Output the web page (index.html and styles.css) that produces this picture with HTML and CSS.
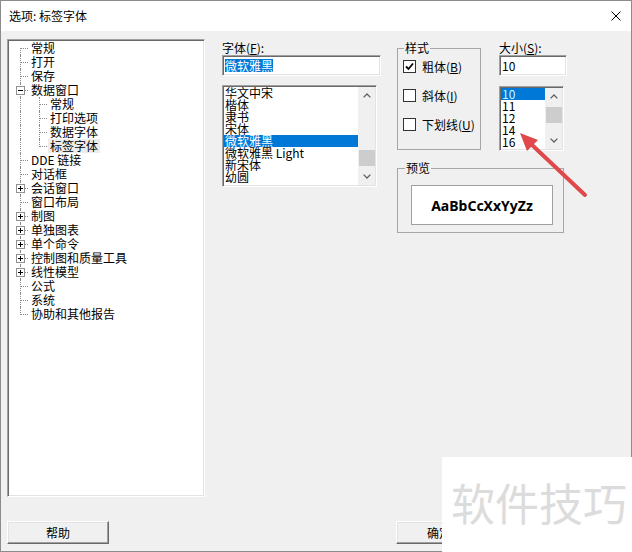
FILE: index.html
```html
<!DOCTYPE html>
<html lang="zh-CN">
<head>
<meta charset="utf-8">
<title>选项: 标签字体</title>
<link rel="stylesheet" href="styles.css">
</head>
<body>
<div class="window">
  <div class="titlebar">
    <span class="title">选项: 标签字体</span>
    <svg class="close" width="10" height="10" viewBox="0 0 10 10"><path d="M0.5 0.5L9.5 9.5M9.5 0.5L0.5 9.5" stroke="#000" stroke-width="1" fill="none"/></svg>
  </div>
  <div class="content">
    <div class="main">
      <div class="tree sunken">
        <div class="row"><span class="g first"></span><span class="lbl">常规</span></div>
        <div class="row"><span class="g tee"></span><span class="lbl">打开</span></div>
        <div class="row"><span class="g tee"></span><span class="lbl">保存</span></div>
        <div class="row"><span class="g tee"><span class="exp"></span></span><span class="lbl">数据窗口</span></div>
        <div class="row"><span class="g pipe"></span><span class="g tee"></span><span class="lbl">常规</span></div>
        <div class="row"><span class="g pipe"></span><span class="g tee"></span><span class="lbl">打印选项</span></div>
        <div class="row"><span class="g pipe"></span><span class="g tee"></span><span class="lbl">数据字体</span></div>
        <div class="row"><span class="g pipe"></span><span class="g last"></span><span class="lbl current">标签字体</span></div>
        <div class="row"><span class="g tee"></span><span class="lbl">DDE 链接</span></div>
        <div class="row"><span class="g tee"></span><span class="lbl">对话框</span></div>
        <div class="row"><span class="g tee"><span class="exp plus"></span></span><span class="lbl">会话窗口</span></div>
        <div class="row"><span class="g tee"></span><span class="lbl">窗口布局</span></div>
        <div class="row"><span class="g tee"><span class="exp plus"></span></span><span class="lbl">制图</span></div>
        <div class="row"><span class="g tee"><span class="exp plus"></span></span><span class="lbl">单独图表</span></div>
        <div class="row"><span class="g tee"><span class="exp plus"></span></span><span class="lbl">单个命令</span></div>
        <div class="row"><span class="g tee"><span class="exp plus"></span></span><span class="lbl">控制图和质量工具</span></div>
        <div class="row"><span class="g tee"><span class="exp plus"></span></span><span class="lbl">线性模型</span></div>
        <div class="row"><span class="g tee"></span><span class="lbl">公式</span></div>
        <div class="row"><span class="g tee"></span><span class="lbl">系统</span></div>
        <div class="row"><span class="g last"></span><span class="lbl">协助和其他报告</span></div>
      </div>

      <div class="font-col">
        <div class="cap">字体(<u>F</u>):</div>
        <div class="input sunken font-input"><span class="hl">微软雅黑</span></div>
        <div class="list sunken font-list">
          <div class="items">
            <div class="item">华文中宋</div>
            <div class="item">楷体</div>
            <div class="item">隶书</div>
            <div class="item">宋体</div>
            <div class="item selected">微软雅黑</div>
            <div class="item">微软雅黑 Light</div>
            <div class="item">新宋体</div>
            <div class="item">幼圆</div>
          </div>
          <div class="sb">
            <div class="arr"><svg width="8" height="5" viewBox="0 0 8 5"><path d="M0.6 4.4L4 1L7.4 4.4" stroke="#606060" stroke-width="1.3" fill="none"/></svg></div>
            <div class="track"><div class="thumb font-thumb"></div></div>
            <div class="arr"><svg width="8" height="5" viewBox="0 0 8 5"><path d="M0.6 0.6L4 4L7.4 0.6" stroke="#606060" stroke-width="1.3" fill="none"/></svg></div>
          </div>
        </div>
      </div>

      <div class="right-col">
        <div class="top-row">
          <fieldset class="group style-group">
            <legend>样式</legend>
            <div class="check"><span class="cb"><svg width="11" height="11" viewBox="0 0 11 11"><path d="M2 5.5L4.5 8L9 2.5" stroke="#000" stroke-width="1.8" fill="none"/></svg></span><span>粗体(<u>B</u>)</span></div>
            <div class="check"><span class="cb"></span><span>斜体(<u>I</u>)</span></div>
            <div class="check"><span class="cb"></span><span>下划线(<u>U</u>)</span></div>
          </fieldset>
          <div class="size-col">
            <div class="cap">大小(<u>S</u>):</div>
            <div class="input sunken size-input">10</div>
            <div class="list sunken size-list">
              <div class="items">
                <div class="item selected cyan">10</div>
                <div class="item">11</div>
                <div class="item">12</div>
                <div class="item">14</div>
                <div class="item">16</div>
              </div>
              <div class="sb">
                <div class="arr"><svg width="8" height="5" viewBox="0 0 8 5"><path d="M0.6 4.4L4 1L7.4 4.4" stroke="#606060" stroke-width="1.3" fill="none"/></svg></div>
                <div class="track"><div class="thumb size-thumb"></div></div>
                <div class="arr"><svg width="8" height="5" viewBox="0 0 8 5"><path d="M0.6 0.6L4 4L7.4 0.6" stroke="#606060" stroke-width="1.3" fill="none"/></svg></div>
              </div>
            </div>
          </div>
        </div>
        <fieldset class="group preview-group">
          <legend>预览</legend>
          <div class="preview">AaBbCcXxYyZz</div>
        </fieldset>
      </div>
    </div>

    <div class="footer">
      <button class="btn help">帮助</button>
      <button class="btn ok">确定</button>
    </div>
  </div>

  <svg class="arrow" width="632" height="552" viewBox="0 0 632 552">
    <line x1="531" y1="144" x2="585" y2="195" stroke="#e0484c" stroke-width="4" stroke-linecap="round"/>
    <polygon points="520,133 527,151 538,140" fill="#e0484c"/>
  </svg>
  <div class="watermark">软件技巧</div>
</div>
</body>
</html>
```

FILE: styles.css
```css
* { box-sizing: border-box; }
html, body { margin: 0; padding: 0; }
body {
  width: 632px;
  height: 552px;
  overflow: hidden;
  background: #fff;
  font-family: "Noto Sans CJK SC", "Noto Sans", sans-serif;
  font-size: 12px;
  color: #000;
}
u { text-decoration: underline; text-underline-offset: 1px; }

.window {
  position: relative;
  width: 632px;
  height: 552px;
  border: 1px solid #8c8c8c;
  background: #f0f0f0;
  display: flex;
  flex-direction: column;
}

.titlebar {
  flex: none;
  height: 30px;
  background: #fff;
  display: flex;
  align-items: center;
  justify-content: space-between;
  padding: 0 10px 0 8px;
}
.title { line-height: 14px; }
.close { display: block; }

.content {
  flex: 1;
  display: flex;
  flex-direction: column;
  padding: 8px 0 0 6px;
}
.main { display: flex; align-items: flex-start; }

.sunken {
  background: #fff;
  border: 1px solid;
  border-color: #a0a0a0 #fff #fff #a0a0a0;
  box-shadow: inset 1px 1px 0 #696969, inset -1px -1px 0 #e3e3e3;
}

/* tree */
.tree {
  flex: none;
  width: 198px;
  height: 458px;
  padding: 1px;
}
.row { display: flex; height: 14px; align-items: stretch; }
.g { position: relative; flex: none; width: 19px; height: 14px; }
.g::before {
  content: "";
  position: absolute;
  left: 11px;
  top: 0;
  height: 14px;
  border-left: 1px dotted #8a8a8a;
}
.g.first::before { top: 7px; height: 7px; }
.g.last::before { height: 8px; }
.g.tee::after, .g.first::after, .g.last::after {
  content: "";
  position: absolute;
  left: 12px;
  top: 7px;
  width: 7px;
  border-top: 1px dotted #8a8a8a;
}
.exp {
  position: absolute;
  z-index: 1;
  left: 7px;
  top: 3px;
  width: 9px;
  height: 9px;
  background: #fff;
  border: 1px solid #919191;
}
.exp::before {
  content: "";
  position: absolute;
  left: 1px;
  top: 3px;
  width: 5px;
  height: 1px;
  background: #000;
}
.exp.plus::after {
  content: "";
  position: absolute;
  left: 3px;
  top: 1px;
  width: 1px;
  height: 5px;
  background: #000;
}
.lbl { margin-left: 1px; padding: 0 2px; line-height: 14px; white-space: nowrap; }
.lbl.current { background: #ececec; }

/* font column */
.cap { margin-top: 2px; height: 14px; line-height: 14px; white-space: nowrap; }
.font-col { flex: none; width: 159px; margin-left: 17px; }
.input { height: 21px; padding: 3px 2px 0 2px; line-height: 13px; white-space: nowrap; }
.font-input { width: 159px; }
.hl { display: inline-block; background: #0078d7; color: #fff; line-height: 13px; }

.list { display: flex; padding: 1px; }
.items { flex: 1; overflow: hidden; }
.item { height: 12px; line-height: 12px; padding-left: 1px; white-space: nowrap; }
.item.selected { background: #0078d7; color: #fff; }
.item.cyan { color: #c6f6ff; }
.font-list { width: 155px; height: 102px; margin-top: 9px; }

.sb { flex: none; width: 17px; display: flex; flex-direction: column; background: #f0f0f0; }
.arr { flex: none; height: 17px; display: flex; align-items: center; justify-content: center; }
.arr svg { display: block; }
.track { flex: 1; }
.thumb { height: 16px; margin-left: 1px; background: #cdcdcd; }
.font-thumb { margin-top: 46px; }
.size-thumb { margin-top: 2px; }

/* right column */
.right-col { flex: none; margin-left: 16px; display: flex; flex-direction: column; }
.top-row { display: flex; align-items: flex-start; }

.group {
  margin: 0;
  min-width: 0;
  border: 1px solid #a6a6a6;
}
.group legend {
  padding: 0 1px;
  line-height: 14px;
  height: 14px;
}

.style-group {
  width: 84px;
  height: 109px;
  margin-top: 2px;
  padding: 4px 0 0 5px;
  display: flex;
  flex-direction: column;
  gap: 15px;
}
.style-group legend { margin-left: 1px; }
.check { display: flex; align-items: center; height: 14px; white-space: nowrap; }
.cb {
  flex: none;
  width: 13px;
  height: 13px;
  margin-right: 6px;
  background: #fff;
  border: 1px solid #333;
  display: flex;
  align-items: center;
  justify-content: center;
}
.cb svg { display: block; }

.size-col { flex: none; width: 68px; margin-left: 18px; }
.size-input { width: 68px; }
.size-list { width: 65px; height: 65px; margin-top: 10px; }

.preview-group {
  width: 167px;
  height: 72px;
  margin-top: 10px;
  padding: 10px 0 0 13px;
}
.preview-group legend { margin-left: -6px; }
.preview {
  width: 142px;
  height: 40px;
  background: #fff;
  border: 1px solid #a0a0a0;
  display: flex;
  align-items: center;
  justify-content: center;
  font-family: "Noto Sans", "Open Sans", sans-serif;
  font-weight: 700;
  font-size: 14px;
}

/* footer */
.footer { display: flex; margin-top: 24px; }
.btn {
  height: 23px;
  padding: 0;
  background: #f0f0f0;
  border: 1px solid;
  border-color: #fff #696969 #696969 #fff;
  box-shadow: inset -1px -1px 0 #a0a0a0, inset 1px 1px 0 #e3e3e3;
  font-family: "Noto Sans CJK SC", "Noto Sans", sans-serif;
  font-size: 12px;
  color: #000;
}
.btn.help { width: 102px; }
.btn.ok { width: 86px; margin-left: 287px; }

/* overlays */
.arrow { position: absolute; left: -1px; top: -1px; pointer-events: none; }
.watermark {
  position: absolute;
  left: 441px;
  top: 456px;
  right: -1px;
  bottom: -1px;
  background: #fff;
  color: #dcdcdc;
  font-size: 44px;
  line-height: 44px;
  padding: 23px 0 0 9px;
  white-space: nowrap;
}
```
